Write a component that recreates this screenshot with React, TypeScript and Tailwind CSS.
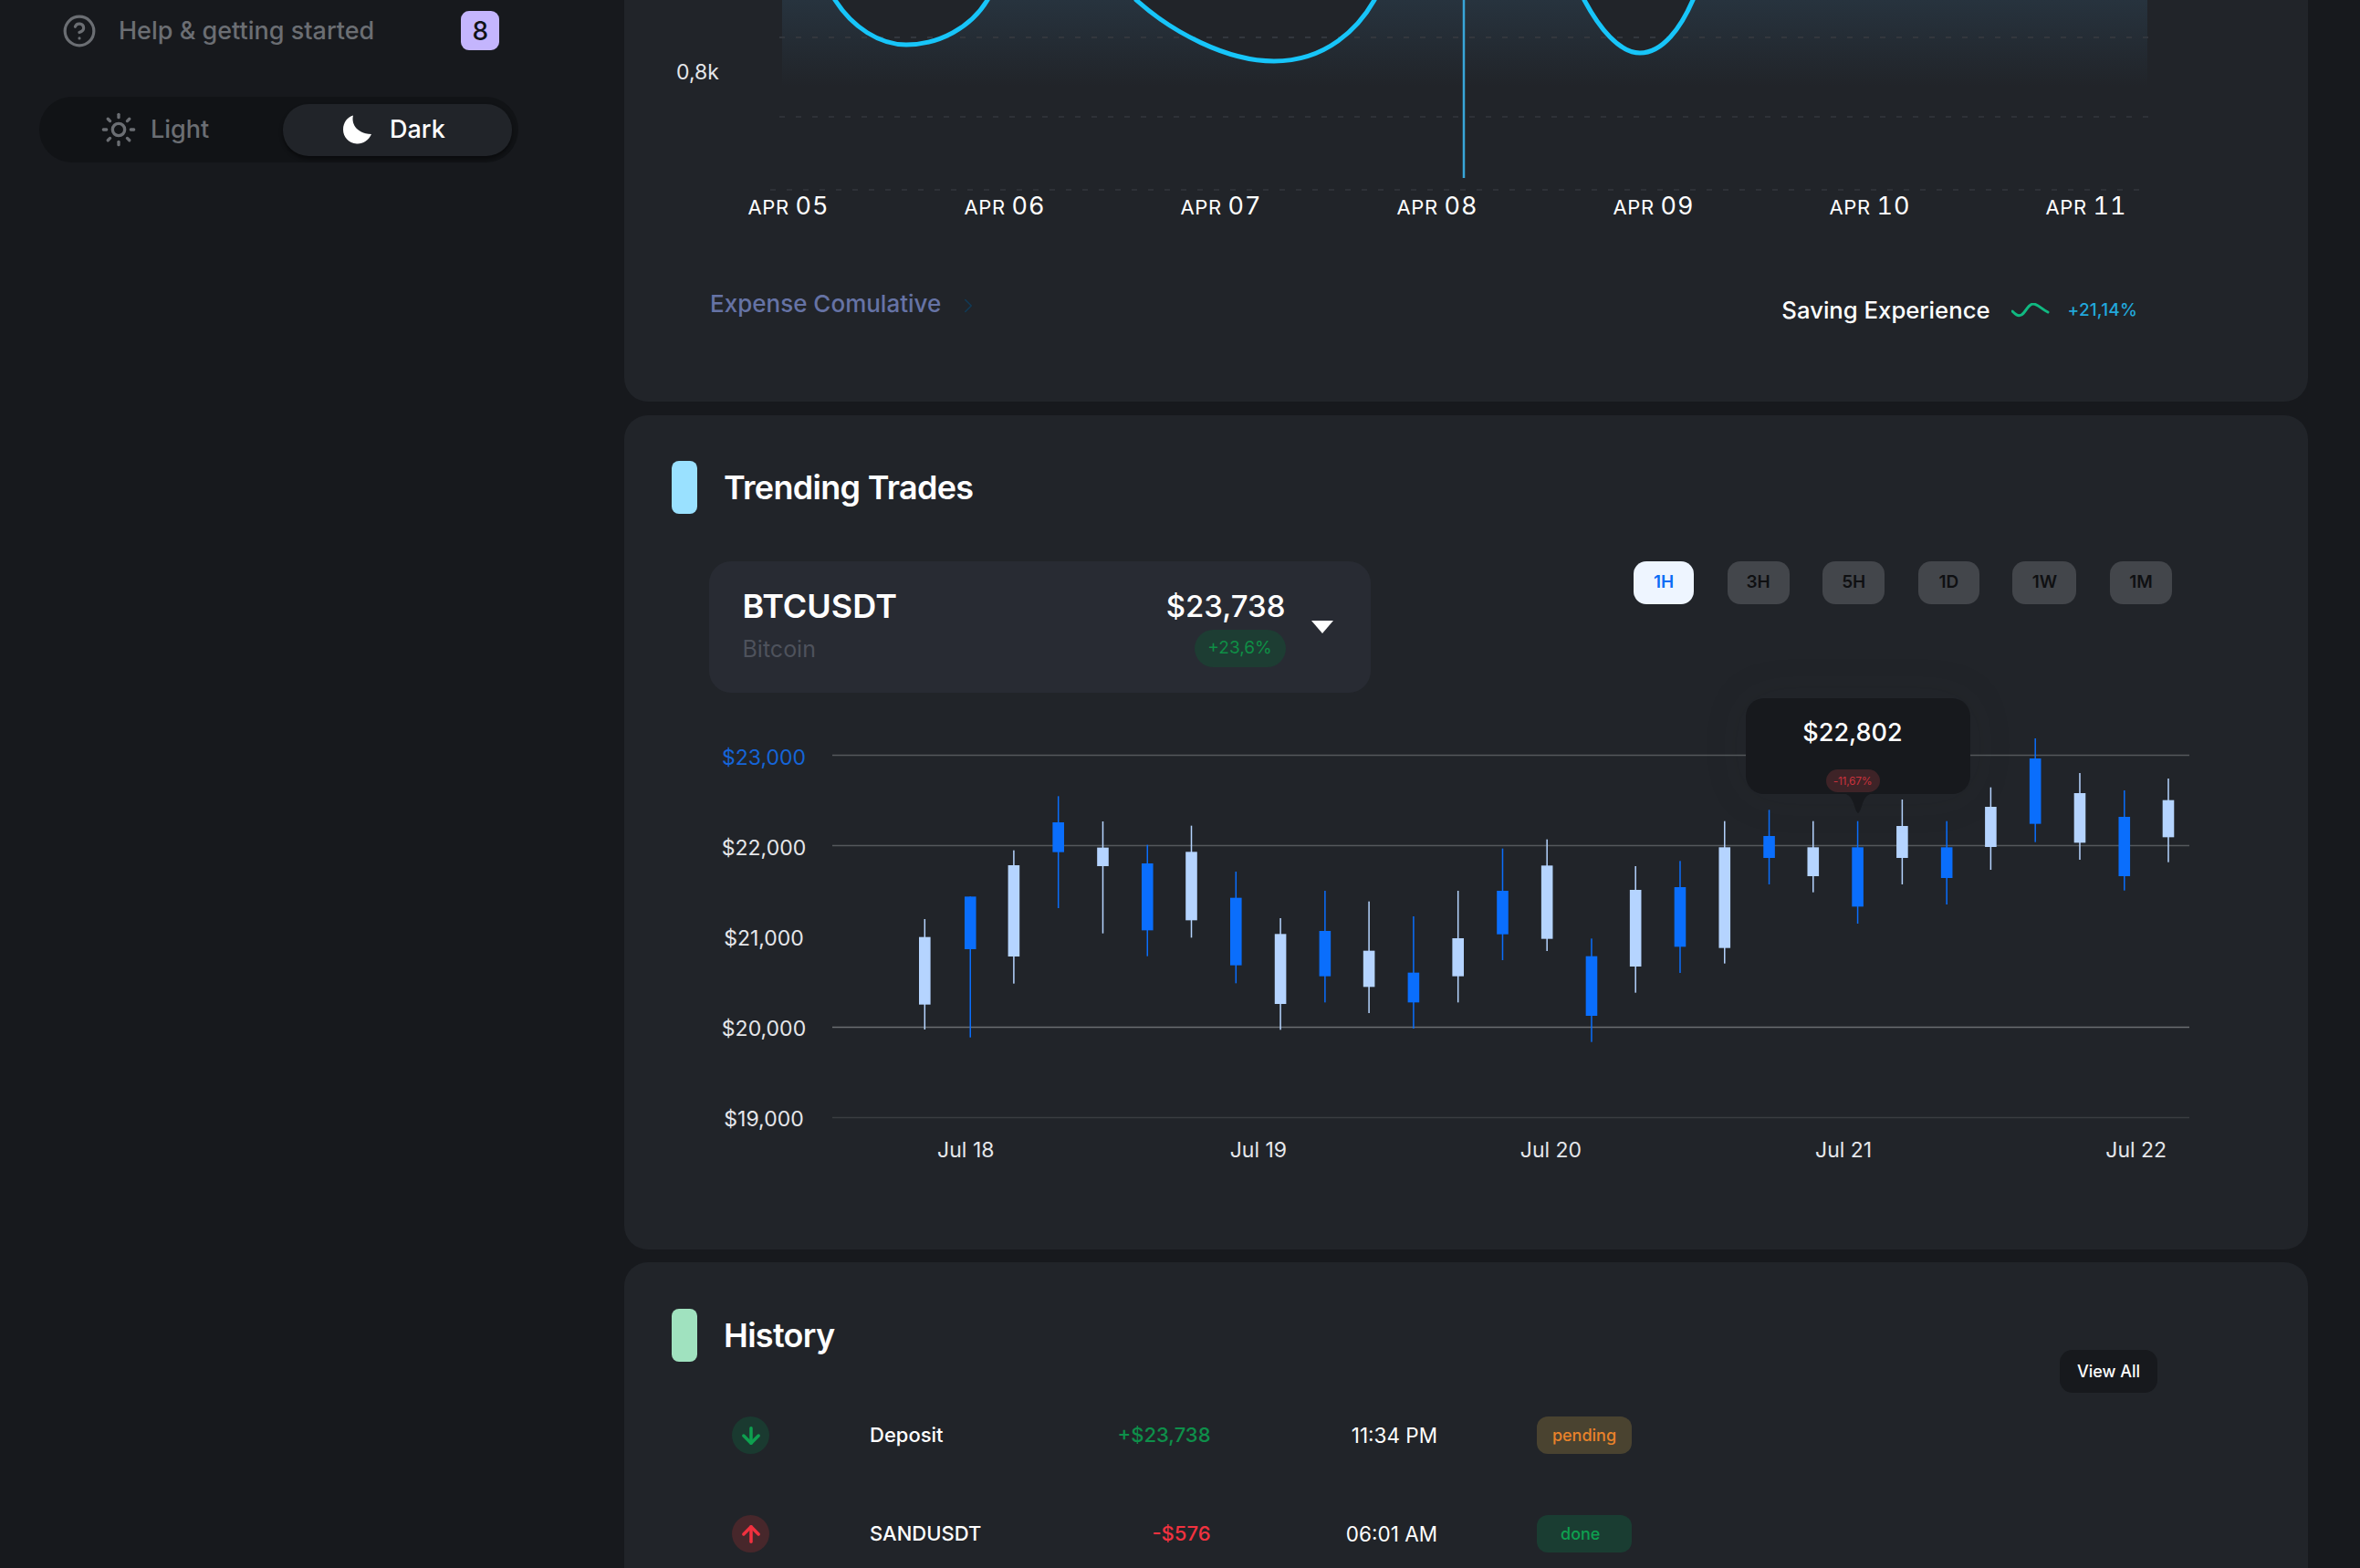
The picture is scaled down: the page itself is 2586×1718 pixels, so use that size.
import { ArrowDown, ArrowUp, ChevronRight, CircleHelp, Sun } from "lucide-react";

const candles: [number, number, number, number, number, number][] = [
  [443, 681, 740, 962, 1044, 0], [530, 607, 607, 780, 1070, 1], [613, 455, 504, 804, 893, 0], [698, 277, 363, 461, 645, 1],
  [783, 360, 446, 507, 728, 0], [868, 437, 498, 718, 803, 1], [952, 374, 460, 685, 742, 0], [1037, 525, 611, 833, 892, 1],
  [1122, 678, 730, 960, 1045, 0], [1207, 588, 720, 869, 955, 1], [1291, 623, 785, 904, 990, 0], [1376, 672, 857, 955, 1041, 1],
  [1461, 588, 744, 869, 955, 0], [1546, 449, 588, 731, 816, 1],
];
const candles2: [number, number, number, number, number, number][] = [
  [63, 419, 505, 746, 786, 0], [148, 745, 803, 999, 1085, 1], [232, 507, 585, 837, 923, 0], [317, 490, 576, 772, 858, 1],
  [402, 359, 445, 776, 827, 0], [487, 322, 408, 480, 567, 1], [571, 359, 445, 540, 593, 0], [656, 359, 445, 640, 696, 1],
  [741, 288, 375, 480, 567, 0], [826, 359, 445, 546, 633, 1], [910, 248, 312, 444, 519, 0], [995, 87, 153, 368, 428, 1],
  [1080, 201, 267, 430, 486, 0], [1165, 258, 345, 540, 587, 1], [1249, 219, 290, 412, 494, 0],
];
const allCandles = [
  ...candles.map((c) => ({ x: 760 + c[0] / 1.742 - 913, c })),
  ...candles2.map((c) => ({ x: 1660 + c[0] / 1.742 - 913, c })),
];

const curve =
  "M50 -40 L71 0 C90 30 120 49 149 49 C185 49 220 30 238 0 C270 -60 370 -60 401 0 C440 35 500 67 552 67 C610 67 645 30 662 0 C690 -60 860 -60 892 0 C908 30 930 58 953 58 C978 58 998 30 1011 0 C1060 -100 1400 -100 1509 -100";

function Spark() {
  return (
    <svg width="42" height="16" viewBox="0 0 42 16" fill="none">
      <path d="M1 9 C4 12 7 15 11 13 C16 10 18 1 24 1 C29 1 32 6 40 10" stroke="#10b981" strokeWidth="3" strokeLinecap="round" />
    </svg>
  );
}

function Moon() {
  return (
    <svg width="32" height="32" viewBox="0 0 32 32">
      <path d="M11 0.5 C 9 8 13 20 31 21 C 28 28 21 32 15 31.5 C 6 31 0 24 0 16 C 0 8 5 2 11 0.5 Z" fill="#ffffff" />
    </svg>
  );
}

function SectionHead({ color, title, children }: { color: string; title: string; children?: React.ReactNode }) {
  return (
    <div className="flex h-[58px] items-start pl-[52px]">
      <div className={`h-[58px] w-[28px] rounded-[8px] ${color}`} />
      <div className="ml-[29px] flex h-[58px] items-center text-[36px] font-semibold leading-none tracking-[-0.7px] text-white">{title}</div>
      {children}
    </div>
  );
}

function Range({ label, active, w }: { label: string; active?: boolean; w: string }) {
  return (
    <div
      className={`flex h-[47px] items-center justify-center rounded-[14px] text-[19px] font-semibold ${w} ${
        active ? "bg-[#eef5ff] text-[#0a6cf5]" : "bg-[#43464b] text-[#0f1012]"
      }`}
    >
      {label}
    </div>
  );
}

function HistoryRow({
  dir, name, amount, amountColor, time, status,
}: { dir: "down" | "up"; name: string; amount: string; amountColor: string; time: string; status: "pending" | "done" }) {
  return (
    <div className="flex h-[41px] items-center pl-[118px] text-[22px] font-medium text-white">
      <div className={`flex h-[41px] w-[41px] items-center justify-center rounded-full ${dir === "down" ? "bg-[#1a3a30]" : "bg-[#47272b]"}`}>
        {dir === "down" ? <ArrowDown size={28} strokeWidth={3} color="#0e9f4f" /> : <ArrowUp size={28} strokeWidth={3} color="#f0313f" />}
      </div>
      <div className="ml-[110px] w-[220px]">{name}</div>
      <div className={`w-[153.5px] text-right text-[22px] ${amountColor}`}>{amount}</div>
      <div className="w-[248.5px] text-right text-[22.5px] font-normal">{time}</div>
      {status === "pending" ? (
        <div className="ml-[109px] flex h-[41px] w-[104px] items-center justify-center rounded-[12px] bg-[#4a4330] text-[18px] text-[#e8822a]">pending</div>
      ) : (
        <div className="ml-[109px] flex h-[41px] w-[104px] items-center rounded-[12px] bg-[#1a3d32] pl-[26px] text-[18px] text-[#0e9f4f]">done</div>
      )}
    </div>
  );
}

export default function App() {
  return (
    <div className="flex h-[1718px] w-[2586px] overflow-hidden bg-[#17191d] font-[Inter,sans-serif]">
      <aside className="w-[684px] shrink-0">
        <div className="mt-[12px] flex h-[43px] items-center pl-[68px]">
          <CircleHelp size={38} strokeWidth={2} color="#6b6e73" />
          <span className="ml-[24px] text-[27px] font-medium leading-[44px] text-[#6b6e73]">Help &amp; getting started</span>
          <div className="ml-[95px] flex h-[43px] w-[42px] items-center justify-center rounded-[9px] bg-[#c4b5fd] text-[28px] font-medium text-[#111316]">8</div>
        </div>
        <div className="ml-[43px] mt-[51px] flex h-[72px] w-[525px] items-center rounded-[36px] bg-[#111316] pl-[67px] pr-[7px]">
          <Sun size={40} strokeWidth={2} color="#6b6e73" />
          <span className="ml-[15px] text-[27px] font-medium text-[#6b6e73]">Light</span>
          <div className="ml-auto flex h-[57px] w-[251px] items-center rounded-[28px] bg-[#212429] pl-[66px] shadow-[0_3px_4px_rgba(0,0,0,0.45)]">
            <Moon />
            <span className="ml-[19px] text-[27px] font-medium text-white">Dark</span>
          </div>
        </div>
      </aside>

      <main className="flex w-[1845px] shrink-0 flex-col">
        <section className="h-[440px] shrink-0 rounded-b-[26px] bg-[#212429]">
          <div className="flex h-[210px]">
            <div className="w-[160px] pl-[57px] pt-[64px] text-[23px] leading-[30px] text-[#e5e7eb]">0,8k</div>
            <svg width="1530" height="210" viewBox="0 0 1530 210" fill="none" className="block">
              <defs>
                <linearGradient id="area" gradientUnits="userSpaceOnUse" x1="0" y1="0" x2="0" y2="95">
                  <stop offset="0" stopColor="#27333e" />
                  <stop offset="1" stopColor="#212429" />
                </linearGradient>
              </defs>
              <path d={`${curve} L1509 100 L13 100 L13 -40 Z`} fill="url(#area)" />
              <path d="M10 41H1520" stroke="#33373d" strokeWidth="2" strokeDasharray="6 12" />
              <path d="M10 128H1520" stroke="#2e3137" strokeWidth="2" strokeDasharray="6 12" />
              <path d="M0 208H1505" stroke="#2e3137" strokeWidth="2" strokeDasharray="6 12" />
              <path d={curve} stroke="#17c5f9" strokeWidth="5" />
              <path d="M760 0V195" stroke="#38a5d8" strokeWidth="2.5" />
            </svg>
          </div>
          <div className="mt-[1px] flex h-[30px] items-center pl-[135.5px] text-white">
            {["05", "06", "07", "08", "09", "10", "11"].map((d) => (
              <div key={d} className="w-[237px] whitespace-nowrap">
                <span className="text-[22px] tracking-[0.6px]">APR </span>
                <span className="text-[27px] tracking-[1px] tabular-nums">{d}</span>
              </div>
            ))}
          </div>
          <div className="mt-[75px] flex items-start pl-[94px] pr-[187px]">
            <span className="text-[26px] font-medium leading-[34px] text-[#6673a5]">Expense Comulative</span>
            <ChevronRight size={26} strokeWidth={1.5} color="#123a55" className="ml-[17px] mt-[6px]" />
            <div className="ml-auto mt-[7px] flex h-[34px] items-center text-white">
              <span className="text-[25.7px] font-medium">Saving Experience</span>
              <span className="ml-[23px]"><Spark /></span>
              <span className="ml-[20px] text-[19px] font-medium tracking-[0.2px] text-[#22a8dc]">+21,14%</span>
            </div>
          </div>
        </section>

        <section className="mt-[15px] h-[914px] shrink-0 rounded-[26px] bg-[#212429] pt-[50px]">
          <SectionHead color="bg-[#9ae1ff]" title="Trending Trades" />
          <div className="mt-[52px] flex items-start pl-[93px] pr-[149px]">
            <div className="flex h-[144px] w-[725px] rounded-[24px] bg-[#282b33] pl-[36.5px] pt-[27px]">
              <div className="flex w-[463px] flex-col">
                <span className="text-[36px] font-semibold leading-[44px] text-white">BTCUSDT</span>
                <span className="mt-[10px] text-[25px] leading-[30px] text-[#4e525c]">Bitcoin</span>
              </div>
              <div className="flex w-[132px] flex-col items-end">
                <span className="text-[33px] font-medium leading-[44px] text-white">$23,738</span>
                <span className="mt-[4px] flex h-[41px] w-[100px] items-center justify-center rounded-full bg-[#1d3d33] text-[19px] text-[#0f8f46]">+23,6%</span>
              </div>
              <svg width="24" height="14" viewBox="0 0 24 14" className="ml-[28px] mt-[38px]">
                <path d="M0 0H24L12 14Z" fill="#ffffff" />
              </svg>
            </div>
            <div className="ml-auto flex gap-[36.6px]">
              <Range label="1H" active w="w-[66px]" />
              <Range label="3H" w="w-[68px]" />
              <Range label="5H" w="w-[68px]" />
              <Range label="1D" w="w-[67px]" />
              <Range label="1W" w="w-[70px]" />
              <Range label="1M" w="w-[68px]" />
            </div>
          </div>

          <div className="relative mt-[21px] flex h-[460px] pl-[108px]">
            <div className="h-[460px] w-[120px] pt-[0.5px]">
              {["$23,000", "$22,000", "$21,000", "$20,000", "$19,000"].map((l, i) => (
                <div key={l} className={`flex h-[99px] w-[90px] items-center justify-center text-[23px] ${i === 0 ? "text-[#1565d8]" : "text-[#e5e7eb]"}`}>
                  {l}
                </div>
              ))}
            </div>
            <svg width="1487" height="460" viewBox="0 0 1487 460" className="block">
              <path d="M0 47.5H1487" stroke="#55585c" strokeWidth="1.5" />
              <path d="M0 146.5H1487" stroke="#55585c" strokeWidth="1.5" />
              <path d="M0 345.5H1487" stroke="#6b6e72" strokeWidth="1.5" />
              <path d="M0 444.5H1487" stroke="#3a3d41" strokeWidth="1.5" />
              {allCandles.map(({ x, c }, i) => {
                const color = c[5] ? "#0a6efc" : "#b5d4ff";
                const y = (v: number) => v / 3;
                return (
                  <g key={i}>
                    <rect x={x - 0.75} y={y(c[1])} width="1.5" height={y(c[4]) - y(c[1])} fill={color} />
                    <rect x={x - 6.3} y={y(c[2])} width="12.6" height={y(c[3]) - y(c[2])} fill={color} />
                  </g>
                );
              })}
            </svg>
            <div className="absolute left-[1229px] top-[-15px] flex h-[105px] w-[246px] flex-col items-center rounded-[20px] bg-[#17191d] pr-[12px] pt-[20px] shadow-[0_0_50px_rgba(60,60,60,0.1)]">
              <span className="text-[27px] font-medium leading-[36px] text-white">$22,802</span>
              <span className="mt-[22px] flex h-[25px] w-[59px] items-center justify-center rounded-full bg-[#3e2327] text-[12px] tracking-[-0.3px] text-[#c8323c]">-11,67%</span>
              <svg width="40" height="24" viewBox="0 0 40 24" className="absolute left-[103px] top-[104px]">
                <path d="M0 0 C10 0 12 4 15 11 C17 18 19 22 20 22 C21 22 23 18 25 11 C28 4 30 0 40 0 Z" fill="#17191d" />
              </svg>
            </div>
          </div>
          <div className="mt-[5px] flex h-[30px] items-center pl-[214px] text-[23px] text-[#e5e7eb]">
            {["Jul 18", "Jul 19", "Jul 20", "Jul 21", "Jul 22"].map((l) => (
              <div key={l} className="w-[320.6px] text-center">{l}</div>
            ))}
          </div>
        </section>

        <section className="mt-[14px] h-[400px] shrink-0 rounded-t-[26px] bg-[#212429] pt-[51px]">
          <SectionHead color="bg-[#a0e2bf]" title="History">
            <div className="ml-auto mr-[165px] mt-[45px] flex h-[47px] w-[107px] items-center justify-center rounded-[14px] bg-[#17191d] text-[18px] font-medium text-white">
              View All
            </div>
          </SectionHead>
          <div className="mt-[60px] flex flex-col gap-[67px]">
            <HistoryRow dir="down" name="Deposit" amount="+$23,738" amountColor="text-[#0e8f4a]" time="11:34 PM" status="pending" />
            <HistoryRow dir="up" name="SANDUSDT" amount="-$576" amountColor="text-[#f1323f]" time="06:01 AM" status="done" />
          </div>
        </section>
      </main>
    </div>
  );
}
